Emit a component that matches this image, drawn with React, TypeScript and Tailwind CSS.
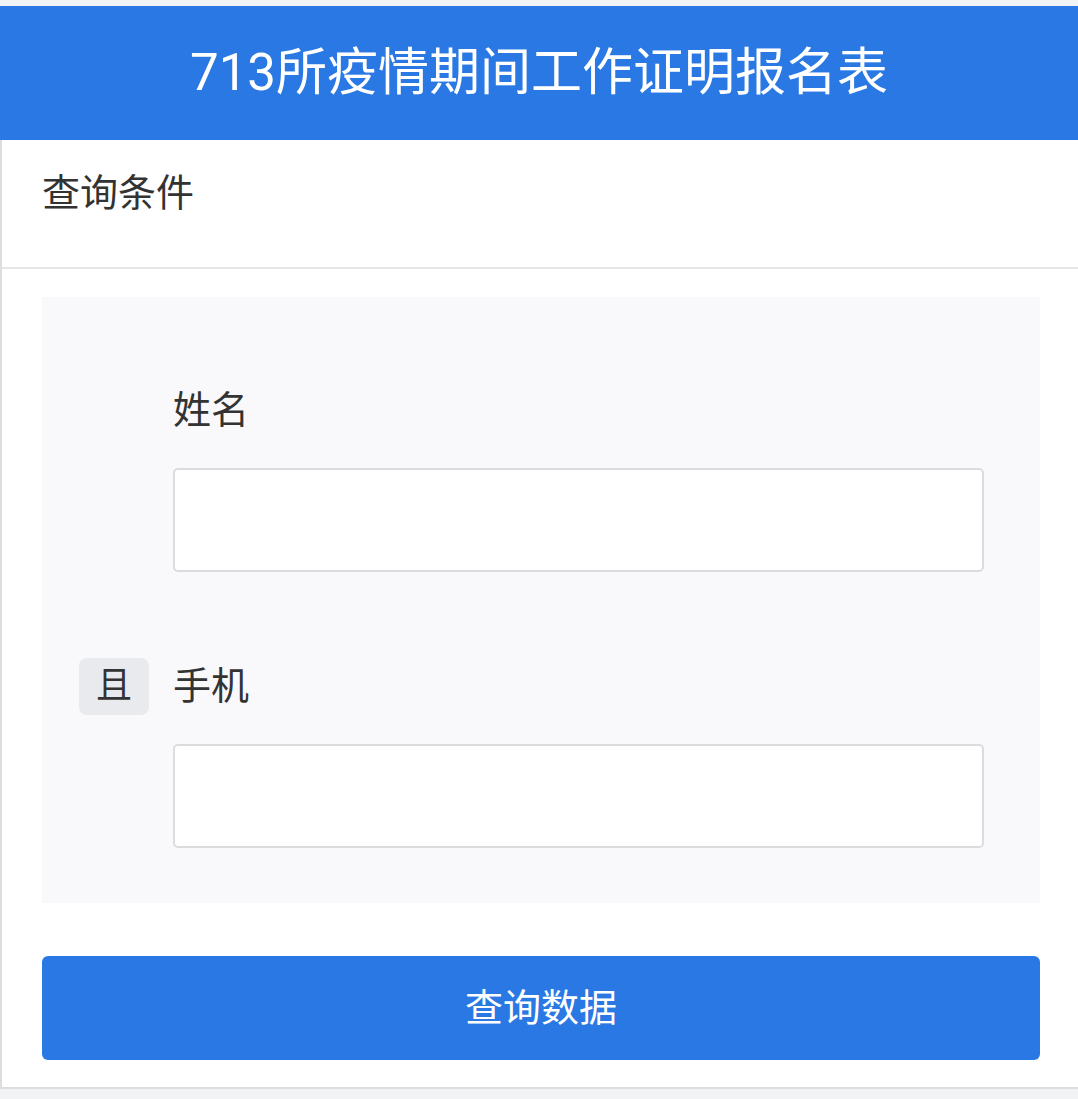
const FONT = "font-['Roboto','Noto_Sans_CJK_SC',sans-serif]";

interface Field {
  label: string;
  joiner?: string;
}

const FIELDS: Field[] = [{ label: "姓名" }, { label: "手机", joiner: "且" }];

export default function App() {
  return (
    <div className={`min-h-screen bg-[#f2f3f5] pt-[6px] ${FONT}`}>
      {/* Title bar */}
      <header className="flex h-[134px] items-center justify-center bg-[#2a78e3] text-[51px] text-white">
        713所疫情期间工作证明报名表
      </header>

      {/* Query card */}
      <div className="border-b-2 border-l-2 border-[#dcdde1] bg-white">
        <div className="flex h-[129px] items-center border-b-2 border-[#e6e6e8] px-[40px] pb-[20px] text-[38px] text-[#333]">
          查询条件
        </div>

        <div className="pt-[28px] pr-[38px] pb-[27px] pl-[40px]">
          <div className="flex flex-col gap-[86px] bg-[#f9f9fb] pt-[85px] pb-[55px]">
            {FIELDS.map((field) => (
              <div key={field.label} className="grid grid-cols-[131px_1fr]">
                <div className="flex h-[56px] items-center justify-end pr-[24px]">
                  {field.joiner && (
                    <span className="flex h-[57px] w-[70px] items-center justify-center rounded-[8px] bg-[#e9eaed] text-[36px] text-[#333]">
                      {field.joiner}
                    </span>
                  )}
                </div>
                <div className="pr-[56px]">
                  <div className="flex h-[56px] items-center text-[38px] text-[#333]">
                    {field.label}
                  </div>
                  <input
                    type="text"
                    className="mt-[30px] block h-[104px] w-full rounded-[5px] border-2 border-[#dcdcdf] bg-white px-4 text-[34px] outline-none"
                  />
                </div>
              </div>
            ))}
          </div>

          <button
            type="button"
            className="mt-[53px] flex h-[104px] w-full items-center justify-center rounded-[6px] bg-[#2a78e3] text-[38px] text-white"
          >
            查询数据
          </button>
        </div>
      </div>
    </div>
  );
}
